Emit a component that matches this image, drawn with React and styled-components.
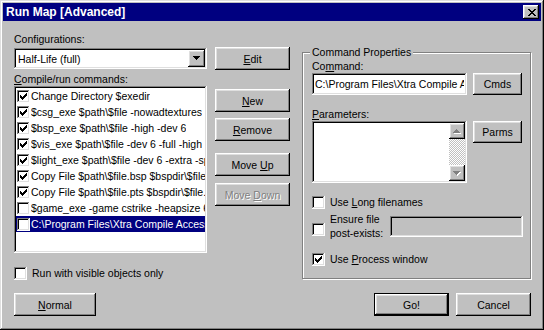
import React from "react";
import styled, { createGlobalStyle, css } from "styled-components";

const GlobalStyle = createGlobalStyle`
  html, body {
    margin: 0;
    padding: 0;
    background: #c0c0c0;
  }
  body {
    font-family: "Liberation Sans", Arial, sans-serif;
    font-size: 10.5px;
    color: #000;
  }
  * {
    box-sizing: border-box;
  }
`;

// classic 3d bevels
const raised = css`
  box-shadow: inset -1px -1px #000, inset 1px 1px #fff, inset -2px -2px #808080,
    inset 2px 2px #dfdfdf;
`;
const sunken = css`
  box-shadow: inset -1px -1px #fff, inset 1px 1px #808080, inset -2px -2px #dfdfdf,
    inset 2px 2px #000;
`;

const Window = styled.div`
  width: 544px;
  height: 330px;
  padding: 3px;
  background: #c0c0c0;
  box-shadow: inset -1px -1px #000, inset 1px 1px #dfdfdf, inset -2px -2px #808080,
    inset 2px 2px #fff;
  display: flex;
  flex-direction: column;
`;

const TitleBar = styled.div`
  height: 18px;
  background: #000080;
  display: flex;
  align-items: center;
  justify-content: space-between;
  padding: 0 2px 0 3px;
`;

const Title = styled.span`
  color: #fff;
  font-weight: bold;
  font-size: 12px;
  line-height: 1;
`;

const CloseButton = styled.div`
  width: 16px;
  height: 14px;
  background: #c0c0c0;
  ${raised};
  display: flex;
  align-items: center;
  justify-content: center;
  padding-left: 1px;
`;

const Body = styled.div`
  flex: 1;
  display: flex;
  flex-direction: column;
  padding-left: 11px;
`;

const Top = styled.div`
  display: flex;
  align-items: flex-start;
`;

const LeftCol = styled.div`
  width: 193px;
  padding-top: 12px;
  display: flex;
  flex-direction: column;
`;

const Label = styled.div`
  height: 13px;
  line-height: 13px;
  white-space: nowrap;
  margin-top: ${(p) => p.$mt || 0}px;
`;

const Combo = styled.div`
  height: 21px;
  margin-top: 2px;
  background: #fff;
  ${sunken};
  padding: 2px;
  display: flex;
  align-items: center;
`;

const ComboText = styled.span`
  flex: 1;
  padding-left: 2px;
  white-space: nowrap;
`;

const ComboButton = styled.div`
  width: 17px;
  height: 17px;
  background: #c0c0c0;
  ${raised};
  display: flex;
  align-items: center;
  justify-content: center;
`;

const ListBox = styled.div`
  height: 167px;
  background: #fff;
  ${sunken};
  padding: 2px;
  overflow: hidden;
`;

const ListRow = styled.div`
  height: 16px;
  display: flex;
  align-items: center;
  padding-left: 1px;
  background: ${(p) => (p.$selected ? "#000080" : "transparent")};
  color: ${(p) => (p.$selected ? "#fff" : "#000")};
`;

const RowText = styled.span`
  margin-left: 1px;
  white-space: nowrap;
  overflow: hidden;
`;

const Box = styled.div`
  width: 13px;
  height: 13px;
  flex-shrink: 0;
  background: #fff;
  ${sunken};
  display: flex;
  align-items: center;
  justify-content: center;
  margin-top: ${(p) => p.$mt || 0}px;
`;

const CheckLine = styled.div`
  display: flex;
  align-items: center;
  gap: 5px;
  height: 13px;
  line-height: 13px;
  white-space: nowrap;
  margin-top: ${(p) => p.$mt || 0}px;
`;

const ButtonCol = styled.div`
  width: 75px;
  margin-left: 8px;
  padding-top: 26px;
  display: flex;
  flex-direction: column;
`;

const Button = styled.div`
  width: ${(p) => p.$w || 75}px;
  height: ${(p) => p.$h || 23}px;
  flex-shrink: 0;
  margin-top: ${(p) => p.$mt || 0}px;
  background: #c0c0c0;
  ${(p) =>
    p.$default
      ? css`
          box-shadow: inset 0 0 0 1px #000, inset -2px -2px #000, inset 2px 2px #fff,
            inset -3px -3px #808080, inset 3px 3px #dfdfdf;
        `
      : raised};
  display: flex;
  align-items: center;
  justify-content: center;
  white-space: nowrap;
  color: ${(p) => (p.$disabled ? "#808080" : "#000")};
  text-shadow: ${(p) => (p.$disabled ? "1px 1px 0 #fff" : "none")};
`;

const GroupBox = styled.div`
  width: 229px;
  height: 227px;
  margin-left: 12px;
  margin-top: 31px;
  border: 1px solid #808080;
  box-shadow: inset 1px 1px #fff, 1px 1px #fff;
  padding: 0 7px 0 9px;
  display: flex;
  flex-direction: column;
`;

const Legend = styled.span`
  align-self: flex-start;
  margin: -7px 0 0 -2px;
  padding: 0 2px;
  height: 13px;
  line-height: 13px;
  background: #c0c0c0;
  white-space: nowrap;
`;

const FieldRow = styled.div`
  display: flex;
  align-items: ${(p) => p.$align || "center"};
  gap: 6px;
`;

const TextBox = styled.div`
  width: 155px;
  height: 22px;
  background: #fff;
  ${sunken};
  padding: 0 3px;
  display: flex;
  align-items: center;
`;

const FieldText = styled.span`
  display: block;
  width: 100%;
  overflow: hidden;
  white-space: nowrap;
`;

const TextArea = styled.div`
  width: 155px;
  height: 62px;
  background: #fff;
  ${sunken};
  padding: 2px;
  display: flex;
  justify-content: flex-end;
`;

const ScrollBar = styled.div`
  width: 16px;
  display: flex;
  flex-direction: column;
`;

const ScrollArrow = styled.div`
  width: 16px;
  height: 16px;
  background: #c0c0c0;
  ${raised};
  display: flex;
  align-items: center;
  justify-content: center;
`;

const Track = styled.div`
  flex: 1;
  background: repeating-conic-gradient(#c0c0c0 0 25%, #fff 0 50%) 0 0 / 2px 2px;
`;

const EnsureRow = styled.div`
  display: flex;
  align-items: flex-start;
  margin-top: 3px;
`;

const EnsureLabel = styled.div`
  margin-left: 5px;
  line-height: 14px;
  white-space: nowrap;
`;

const DisabledEdit = styled.div`
  width: 133px;
  height: 21px;
  margin-left: auto;
  margin-top: 4px;
  background: #c0c0c0;
  ${sunken};
`;

const Bottom = styled.div`
  display: flex;
  align-items: center;
  margin-top: 13px;
  padding-right: 10px;
`;

const Spacer = styled.div`
  flex: 1;
`;

const BottomGap = styled.div`
  width: 7px;
`;

function Check() {
  return (
    <svg width="7" height="7" viewBox="0 0 7 7" shapeRendering="crispEdges">
      <path
        fill="#000"
        d="M6 0h1v1h-1z M5 1h2v1h-2z M0 2h1v1h-1z M4 2h3v1h-3z M0 3h2v1h-2z M3 3h3v1h-3z M0 4h5v1h-5z M1 5h3v1h-3z M2 6h1v1h-1z"
      />
    </svg>
  );
}

function CheckBox({ checked, mt }) {
  return <Box $mt={mt}>{checked && <Check />}</Box>;
}

function DownArrow({ color = "#000", shadow }) {
  const d = "M0 0h7v1h-7z M1 1h5v1h-5z M2 2h3v1h-3z M3 3h1v1h-1z";
  return (
    <svg width="8" height="5" viewBox="0 0 8 5" shapeRendering="crispEdges">
      {shadow && <path fill="#fff" transform="translate(1 1)" d={d} />}
      <path fill={color} d={d} />
    </svg>
  );
}

function UpArrow({ color = "#000", shadow }) {
  const d = "M3 0h1v1h-1z M2 1h3v1h-3z M1 2h5v1h-5z M0 3h7v1h-7z";
  return (
    <svg width="8" height="5" viewBox="0 0 8 5" shapeRendering="crispEdges">
      {shadow && <path fill="#fff" transform="translate(1 1)" d={d} />}
      <path fill={color} d={d} />
    </svg>
  );
}

const commands = [
  { text: "Change Directory $exedir", on: true },
  { text: "$csg_exe $path\\$file -nowadtextures", on: true },
  { text: "$bsp_exe $path\\$file -high -dev 6", on: true },
  { text: "$vis_exe $path\\$file -dev 6 -full -high", on: true },
  { text: "$light_exe $path\\$file -dev 6 -extra -sparse", on: true },
  { text: "Copy File $path\\$file.bsp $bspdir\\$file.bsp", on: true },
  { text: "Copy File $path\\$file.pts $bspdir\\$file.pts", on: true },
  { text: "$game_exe -game cstrike -heapsize 64000", on: false },
  { text: "C:\\Program Files\\Xtra Compile Access\\xca.exe", on: false, selected: true },
];

export default function App() {
  return (
    <>
      <GlobalStyle />
      <Window>
        <TitleBar>
          <Title>Run Map [Advanced]</Title>
          <CloseButton>
            <svg width="8" height="7" viewBox="0 0 8 7" shapeRendering="crispEdges">
              <path
                fill="#000"
                d="M0 0h2v1h-2z M6 0h2v1h-2z M1 1h2v1h-2z M5 1h2v1h-2z M2 2h4v1h-4z M3 3h2v1h-2z M2 4h4v1h-4z M1 5h2v1h-2z M5 5h2v1h-2z M0 6h2v1h-2z M6 6h2v1h-2z"
              />
            </svg>
          </CloseButton>
        </TitleBar>
        <Body>
          <Top>
            <LeftCol>
              <Label>Configurations:</Label>
              <Combo>
                <ComboText>Half-Life (full)</ComboText>
                <ComboButton>
                  <DownArrow />
                </ComboButton>
              </Combo>
              <Label $mt={4}>
                <u>C</u>ompile/run commands:
              </Label>
              <ListBox>
                {commands.map((c) => (
                  <ListRow key={c.text} $selected={c.selected}>
                    <CheckBox checked={c.on} />
                    <RowText>{c.text}</RowText>
                  </ListRow>
                ))}
              </ListBox>
              <CheckLine $mt={14}>
                <CheckBox />
                <span>Run with visible objects only</span>
              </CheckLine>
            </LeftCol>

            <ButtonCol>
              <Button>
                <u>E</u>dit
              </Button>
              <Button $mt={19}>
                <u>N</u>ew
              </Button>
              <Button $mt={6}>
                <u>R</u>emove
              </Button>
              <Button $mt={12}>
                Move&nbsp;<u>U</u>p
              </Button>
              <Button $mt={7} $disabled>
                Move&nbsp;<u>D</u>own
              </Button>
            </ButtonCol>

            <GroupBox>
              <Legend>Command Properties</Legend>
              <Label $mt={1}>
                Co<u>m</u>mand:
              </Label>
              <FieldRow>
                <TextBox>
                  <FieldText>C:\Program Files\Xtra Compile Access</FieldText>
                </TextBox>
                <Button $w={49} $h={22}>
                  Cmds
                </Button>
              </FieldRow>
              <Label $mt={13}>
                <u>P</u>arameters:
              </Label>
              <FieldRow $align="flex-start">
                <TextArea>
                  <ScrollBar>
                    <ScrollArrow>
                      <UpArrow color="#808080" shadow />
                    </ScrollArrow>
                    <Track />
                    <ScrollArrow>
                      <DownArrow color="#808080" shadow />
                    </ScrollArrow>
                  </ScrollBar>
                </TextArea>
                <Button $w={49} $h={22}>
                  Parms
                </Button>
              </FieldRow>
              <CheckLine $mt={13}>
                <CheckBox />
                <span>
                  Use <u>L</u>ong filenames
                </span>
              </CheckLine>
              <EnsureRow>
                <CheckBox mt={11} />
                <EnsureLabel>
                  Ensure file
                  <br />
                  post-exists:
                </EnsureLabel>
                <DisabledEdit />
              </EnsureRow>
              <CheckLine $mt={13}>
                <CheckBox checked />
                <span>
                  Use <u>P</u>rocess window
                </span>
              </CheckLine>
            </GroupBox>
          </Top>

          <Bottom>
            <Button $w={82}>
              <u>N</u>ormal
            </Button>
            <Spacer />
            <Button $default>Go!</Button>
            <BottomGap />
            <Button>Cancel</Button>
          </Bottom>
        </Body>
      </Window>
    </>
  );
}
